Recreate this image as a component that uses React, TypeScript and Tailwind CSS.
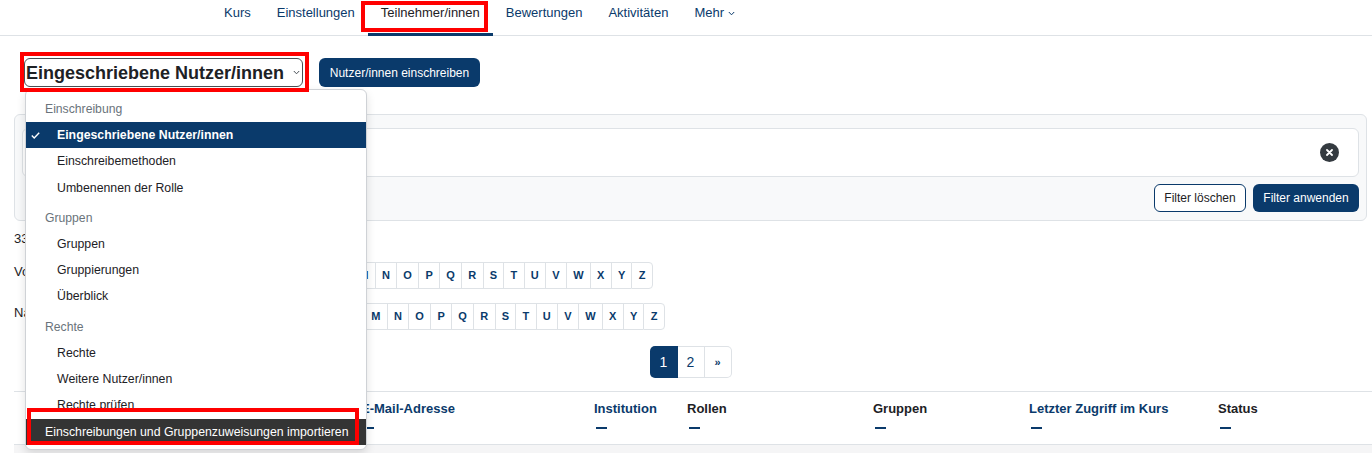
import React from 'react';

const navItems = ['Kurs', 'Einstellungen', 'Teilnehmer/innen', 'Bewertungen', 'Aktivitäten'];

const letters = ['Alle', ...'ABCDEFGHIJKLMNOPQRSTUVWXYZ'.split('')];

type MenuItem = { label: string; selected?: boolean; hovered?: boolean };
type MenuGroup = { title: string; items: MenuItem[] };

const menuGroups: MenuGroup[] = [
    {
        title: 'Einschreibung',
        items: [
            { label: 'Eingeschriebene Nutzer/innen', selected: true },
            { label: 'Einschreibemethoden' },
            { label: 'Umbenennen der Rolle' },
        ],
    },
    {
        title: 'Gruppen',
        items: [{ label: 'Gruppen' }, { label: 'Gruppierungen' }, { label: 'Überblick' }],
    },
    {
        title: 'Rechte',
        items: [
            { label: 'Rechte' },
            { label: 'Weitere Nutzer/innen' },
            { label: 'Rechte prüfen' },
            { label: 'Einschreibungen und Gruppenzuweisungen importieren', hovered: true },
        ],
    },
];

const Chevron: React.FC<{ className?: string }> = ({ className }) => (
    <svg width="7" height="5" viewBox="0 0 7 5" className={className}>
        <path d="M0.8 1 L3.5 3.8 L6.2 1" fill="none" stroke="currentColor" strokeWidth="1" />
    </svg>
);

const Dash: React.FC = () => (
    <svg width="11" height="2" viewBox="0 0 11 2" className="block mt-[10px] ml-[2px]">
        <rect width="11" height="2" fill="#0a3a6b" />
    </svg>
);

const InitialsBar: React.FC<{ label: string; labelWidth: string; className?: string }> = ({
    label,
    labelWidth,
    className,
}) => (
    <div className={`flex items-start ${className ?? ''}`}>
        <span className={`${labelWidth} shrink-0 text-[13px] leading-[19px] whitespace-nowrap`}>{label}</span>
        <div className="flex">
            {letters.map((l, i) => (
                <a
                    key={l}
                    className={`h-[27px] flex items-center px-[6.25px] text-[11px] font-bold text-[#0a3a6b] border-y border-l border-[#dee2e6] ${
                        i === 0 ? 'rounded-l-[4px]' : ''
                    } ${i === letters.length - 1 ? 'border-r rounded-r-[4px]' : ''}`}
                >
                    {l}
                </a>
            ))}
        </div>
    </div>
);

const DropdownMenu: React.FC = () => (
    <div className="absolute left-[25px] top-[89px] w-[342px] bg-white border border-[#cfd2d6] rounded-[6px] shadow-[0_4px_10px_rgba(0,0,0,0.12)] pt-[6px] pb-[4px] z-10">
        {menuGroups.map((group, gi) => (
            <div key={group.title} className={gi > 0 ? 'mt-[4px]' : ''}>
                <div className="h-[26px] flex items-center pl-[19px] text-[12.2px] text-[#6a737b]">{group.title}</div>
                {group.items.map((item) => (
                    <div
                        key={item.label}
                        className={`h-[26.3px] flex items-center text-[12.3px] whitespace-nowrap ${
                            item.selected
                                ? 'bg-[#0a3a6b] text-white font-bold pl-[31px] relative'
                                : item.hovered
                                ? 'bg-[#343434] text-white pl-[19px]'
                                : 'text-[#1d2125] pl-[31px]'
                        }`}
                    >
                        {item.selected && (
                            <svg width="9" height="7" viewBox="0 0 9 7" className="absolute left-[5px] top-[10px]">
                                <path d="M0.8 3.6 L3.2 6 L8.2 0.8" fill="none" stroke="white" strokeWidth="1.4" />
                            </svg>
                        )}
                        {item.label}
                    </div>
                ))}
            </div>
        ))}
    </div>
);

const App: React.FC = () => {
    return (
        <div className="relative w-[1372px] h-[453px] overflow-hidden bg-white font-['Liberation_Sans',Arial,sans-serif] text-[#1d2125]">
            {/* Sekundäre Navigation */}
            <nav className="flex h-[36px] border-b border-[#dee2e6] pl-[211px]">
                {navItems.map((item) => {
                    const active = item === 'Teilnehmer/innen';
                    return (
                        <div key={item} className="relative h-full px-[13px] pt-[4px] flex items-start">
                            <span className={`text-[13px] leading-[17px] ${active ? 'text-[#1d2125]' : 'text-[#0a3a6b]'}`}>
                                {item}
                            </span>
                            {active && <div className="absolute left-0 right-0 -bottom-[1px] h-[3px] bg-[#0a3a6b]" />}
                        </div>
                    );
                })}
                <div className="relative h-full px-[13px] pt-[4px] flex items-start text-[#0a3a6b]">
                    <span className="text-[13px] leading-[17px]">Mehr</span>
                    <Chevron className="ml-[4px] mt-[7px]" />
                </div>
            </nav>

            <div className="pl-[14px] pr-[5px]">
                {/* Auswahl + Button */}
                <div className="flex items-center mt-[22px] ml-[10px] h-[29px]">
                    <div className="w-[279px] h-[29px] border border-[#4a4f55] rounded-[6px] flex items-center pl-[1px] pr-[2px]">
                        <span className="text-[18px] font-bold leading-[22px] whitespace-nowrap">Eingeschriebene Nutzer/innen</span>
                        <Chevron className="ml-auto text-[#495057]" />
                    </div>
                    <button className="ml-[16px] w-[161px] h-[29px] rounded-[6px] bg-[#0a3a6b] text-white text-[12px]">
                        Nutzer/innen einschreiben
                    </button>
                </div>

                {/* Filter */}
                <div className="mt-[27px] h-[107px] bg-[#f8f9fa] border border-[#dee2e6] rounded-[6px] px-[7px] pt-[13px]">
                    <div className="h-[49px] bg-white border border-[#dee2e6] rounded-[6px] flex items-center justify-end pr-[19px]">
                        <div className="w-[19px] h-[19px] rounded-full bg-[#343a40] flex items-center justify-center">
                            <svg width="7" height="7" viewBox="0 0 7 7">
                                <path d="M1 1 L6 6 M6 1 L1 6" stroke="white" strokeWidth="1.8" strokeLinecap="round" />
                            </svg>
                        </div>
                    </div>
                    <div className="flex justify-end gap-[7px] mt-[7px]">
                        <button className="w-[92px] h-[28px] rounded-[6px] border border-[#0a3a6b] bg-white text-[12px] text-[#1d2125]">
                            Filter löschen
                        </button>
                        <button className="w-[106px] h-[28px] rounded-[6px] bg-[#0a3a6b] text-white text-[12px]">
                            Filter anwenden
                        </button>
                    </div>
                </div>

                <p className="mt-[8px] text-[13px] leading-[19px]">33 Teilnehmer/innen gefunden</p>

                <InitialsBar label="Vorname" labelWidth="w-[56px]" className="mt-[14px]" />
                <InitialsBar label="Nachname" labelWidth="w-[68px]" className="mt-[14px]" />

                {/* Seiten */}
                <div className="flex justify-center mt-[16px]">
                    <div className="flex h-[32px] text-[14px]">
                        <span className="w-[28px] flex items-center justify-center bg-[#0a3a6b] text-white rounded-l-[5px]">1</span>
                        <span className="w-[27px] flex items-center justify-center border-y border-r border-[#dee2e6] text-[#0a3a6b]">2</span>
                        <span className="w-[27px] flex items-center justify-center border-y border-r border-[#dee2e6] rounded-r-[5px] text-[#0a3a6b] text-[11px] font-bold">»</span>
                    </div>
                </div>

                {/* Tabelle */}
                <div className="mt-[13px] -mr-[5px]">
                    <div className="grid grid-cols-[40px_307px_233px_93px_186px_156px_189px_1fr] border-y border-[#dee2e6] pt-[9px] pb-[15px] text-[13px] font-bold leading-[16px]">
                        <div />
                        <div>
                            <span className="text-[#0a3a6b]">Vorname</span> / <span className="text-[#0a3a6b]">Nachname</span>
                            <Dash />
                        </div>
                        <div className="text-[#0a3a6b]">
                            E-Mail-Adresse
                            <Dash />
                        </div>
                        <div className="text-[#0a3a6b]">
                            Institution
                            <Dash />
                        </div>
                        <div>
                            Rollen
                            <Dash />
                        </div>
                        <div>
                            Gruppen
                            <Dash />
                        </div>
                        <div className="text-[#0a3a6b]">
                            Letzter Zugriff im Kurs
                            <Dash />
                        </div>
                        <div>
                            Status
                            <Dash />
                        </div>
                    </div>
                    <div className="h-[40px] bg-[#f5f5f6]" />
                </div>
            </div>

            <DropdownMenu />

            {/* Markierungen */}
            <div className="absolute left-[361px] top-[1px] w-[127px] h-[31px] border-[4px] border-[#ff0000] z-20" />
            <div className="absolute left-[20px] top-[52px] w-[289px] h-[40px] border-[4px] border-[#ff0000] z-20" />
            <div className="absolute left-[27px] top-[408px] w-[332px] h-[37px] border-[4px] border-[#ff0000] z-20" />
        </div>
    );
};

export default App;
